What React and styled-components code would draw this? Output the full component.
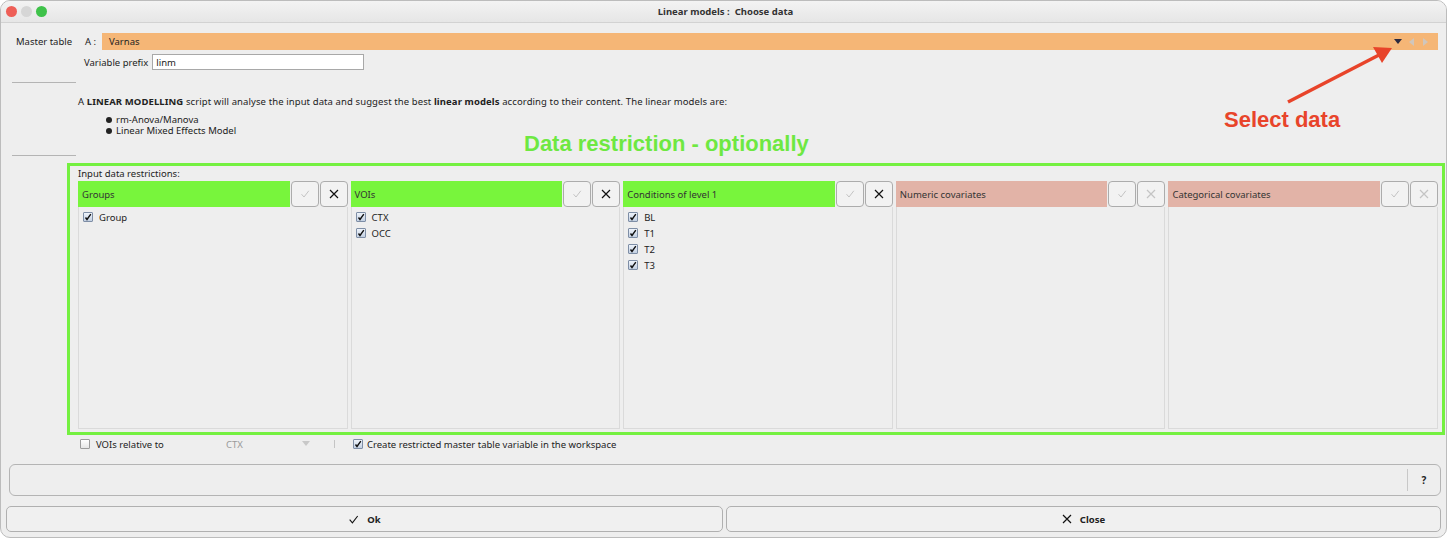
import React from "react";
import styled, { createGlobalStyle } from "styled-components";

const GlobalStyle = createGlobalStyle`
  html, body { margin: 0; padding: 0; background: #ffffff; }
  body { font-family: "Noto Sans", "DejaVu Sans", sans-serif; font-size: 9.5px; color: #222; }
`;

const columns = [
  { title: "Groups", active: true, items: ["Group"] },
  { title: "VOIs", active: true, items: ["CTX", "OCC"] },
  { title: "Conditions of level 1", active: true, items: ["BL", "T1", "T2", "T3"] },
  { title: "Numeric covariates", active: false, items: [] },
  { title: "Categorical covariates", active: false, items: [] },
];

function CheckMark({ color = "#222", size = 10 }) {
  return (
    <svg width={size} height={size} viewBox="0 0 10 10">
      <path d="M1.5 5.2 L4 8 L8.8 1.8" fill="none" stroke={color} strokeWidth="1" />
    </svg>
  );
}

function Cross({ color = "#111", size = 10 }) {
  return (
    <svg width={size} height={size} viewBox="0 0 10 10">
      <path d="M1 1 L9 9 M9 1 L1 9" fill="none" stroke={color} strokeWidth="1.2" />
    </svg>
  );
}

function Check({ checked }) {
  return (
    <Box checked={checked}>
      {checked ? (
        <svg width="8" height="8" viewBox="0 0 8 8">
          <path d="M1.5 4.5 L3 6.5 L6.8 1.2" fill="none" stroke="#111" strokeWidth="1.4" />
        </svg>
      ) : null}
    </Box>
  );
}

function App() {
  return (
    <>
      <GlobalStyle />
      <Window>
        <TitleBar>
          <Lights>
            <Light color="#ee5f57" />
            <Light color="#d6d6d6" />
            <Light color="#3fc24a" />
          </Lights>
          <Title>Linear models :&nbsp; Choose data</Title>
        </TitleBar>
        <Body>
          <TopRow>
            <Label>Master table</Label>
            <Prefix>A :</Prefix>
            <Selector>
              <span>Varnas</span>
              <SelectorTools>
                <svg width="8" height="6" viewBox="0 0 8 6">
                  <path d="M0 0 H8 L4 5 Z" fill="#2a2a40" />
                </svg>
                <svg width="6" height="8" viewBox="0 0 6 8">
                  <path d="M5 0 V8 L0 4 Z" fill="#d0c6bc" />
                </svg>
                <svg width="6" height="8" viewBox="0 0 6 8">
                  <path d="M1 0 V8 L6 4 Z" fill="#d0c6bc" />
                </svg>
              </SelectorTools>
            </Selector>
          </TopRow>
          <PrefixRow>
            <span>Variable prefix</span>
            <TextInput>linm</TextInput>
          </PrefixRow>
          <Separator gap={12} />
          <Description>
            A <b>LINEAR MODELLING</b> script will analyse the input data and suggest the best{" "}
            <b>linear models</b> according to their content. The linear models are:
          </Description>
          <Bullets>
            <li>rm-Anova/Manova</li>
            <li>Linear Mixed Effects Model</li>
          </Bullets>
          <Separator gap={0} />
          <Frame>
            <FrameLabel>Input data restrictions:</FrameLabel>
            <Columns>
              {columns.map((col) => (
                <Column key={col.title}>
                  <Header>
                    <HeaderTitle active={col.active}>{col.title}</HeaderTitle>
                    <SquareButton>
                      <CheckMark color="#c4c4c4" />
                    </SquareButton>
                    <SquareButton>
                      <Cross color={col.active ? "#111" : "#c4c4c4"} />
                    </SquareButton>
                  </Header>
                  <List>
                    {col.items.map((item) => (
                      <Item key={item}>
                        <Check checked />
                        <span>{item}</span>
                      </Item>
                    ))}
                  </List>
                </Column>
              ))}
            </Columns>
          </Frame>
          <OptionsRow>
            <Check checked={false} />
            <OptionText>VOIs relative to</OptionText>
            <Muted>CTX</Muted>
            <svg width="8" height="6" viewBox="0 0 8 6">
              <path d="M0 0 H8 L4 5 Z" fill="#c8c8c8" />
            </svg>
            <VBar />
            <Check checked />
            <span>Create restricted master table variable in the workspace</span>
          </OptionsRow>
          <StatusBar>
            <StatusText />
            <HelpCell>?</HelpCell>
          </StatusBar>
          <ButtonRow>
            <ActionButton>
              <CheckMark color="#111" size={11} />
              <span>Ok</span>
            </ActionButton>
            <ActionButton>
              <Cross color="#111" size={10} />
              <span>Close</span>
            </ActionButton>
          </ButtonRow>
        </Body>

        <Annotation color="#6ee842" top={131} left={523}>
          Data restriction - optionally
        </Annotation>
        <Annotation color="#e8442a" top={107} left={1223}>
          Select data
        </Annotation>
        <Arrow width="120" height="70" viewBox="0 0 120 70">
          <line x1="7" y1="61" x2="98" y2="14" stroke="#e8442a" strokeWidth="3.5" />
          <path d="M111 7 L92 6 L101 22 Z" fill="#e8442a" />
        </Arrow>
      </Window>
    </>
  );
}

const Window = styled.div`
  position: relative;
  box-sizing: border-box;
  width: 1447px;
  height: 538px;
  border: 1px solid #bcbcbc;
  border-radius: 10px;
  overflow: hidden;
  background: #eeeeee;
`;

const TitleBar = styled.div`
  position: relative;
  height: 21px;
  display: flex;
  align-items: center;
  justify-content: center;
  background: linear-gradient(#f3f3f3, #e6e6e6);
  border-bottom: 1px solid #d2d2d2;
`;

const Lights = styled.div`
  position: absolute;
  left: 5px;
  top: 5px;
  display: flex;
  gap: 4px;
`;

const Light = styled.span`
  width: 11px;
  height: 11px;
  border-radius: 50%;
  background: ${({ color }) => color};
`;

const Title = styled.div`
  font-weight: 700;
  font-size: 9.5px;
  color: #333;
  margin-left: 4px;
`;

const Body = styled.div`
  display: flex;
  flex-direction: column;
`;

const TopRow = styled.div`
  margin-top: 10px;
  height: 17px;
  display: flex;
  align-items: center;
  padding-left: 15px;
  padding-right: 8px;
`;

const Label = styled.span`
  width: 69px;
`;

const Prefix = styled.span`
  width: 17px;
`;

const Selector = styled.div`
  flex: 1;
  height: 17px;
  background: #f5b676;
  display: flex;
  align-items: center;
  justify-content: space-between;
  padding: 0 10px 0 7px;
`;

const SelectorTools = styled.div`
  display: flex;
  align-items: center;
  gap: 7px;
`;

const PrefixRow = styled.div`
  margin-top: 4px;
  height: 16px;
  display: flex;
  align-items: center;
  gap: 4px;
  padding-left: 83px;
`;

const TextInput = styled.div`
  box-sizing: border-box;
  width: 212px;
  height: 16px;
  background: #ffffff;
  border: 1px solid #a8a8a8;
  padding: 0 3px;
  display: flex;
  align-items: center;
`;

const Separator = styled.div`
  margin-top: ${({ gap }) => gap}px;
  margin-left: 11px;
  width: 64px;
  height: 1px;
  background: #b4b4b4;
`;

const Description = styled.div`
  margin-top: 12px;
  padding-left: 77px;
  line-height: 13px;
  letter-spacing: 0.1px;
  b {
    font-weight: 700;
  }
`;

const Bullets = styled.ul`
  margin: 6px 0 19px;
  padding-left: 115px;
  line-height: 11px;
  list-style: none;
  li {
    position: relative;
  }
  li::before {
    content: "";
    position: absolute;
    left: -10px;
    top: 3px;
    width: 6px;
    height: 6px;
    border-radius: 50%;
    background: #222;
  }
`;

const Frame = styled.div`
  box-sizing: border-box;
  margin: 7px 0 0 66px;
  width: 1378px;
  height: 272px;
  border: 3px solid #74f040;
  padding: 2px 4px 3px 8px;
  display: flex;
  flex-direction: column;
`;

const FrameLabel = styled.div`
  height: 12px;
  line-height: 12px;
`;

const Columns = styled.div`
  margin-top: 1px;
  flex: 1;
  display: grid;
  grid-template-columns: repeat(5, 1fr);
  gap: 3px;
`;

const Column = styled.div`
  display: flex;
  flex-direction: column;
  min-width: 0;
`;

const Header = styled.div`
  height: 26px;
  display: flex;
  gap: 1px;
`;

const HeaderTitle = styled.div`
  flex: 1;
  background: ${({ active }) => (active ? "#78f53c" : "#e2b3a7")};
  display: flex;
  align-items: center;
  padding-left: 4px;
  color: #333;
`;

const SquareButton = styled.div`
  box-sizing: border-box;
  width: 28px;
  height: 26px;
  border: 1px solid #acacac;
  border-radius: 4px;
  background: #f2f2f2;
  display: flex;
  align-items: center;
  justify-content: center;
`;

const List = styled.div`
  flex: 1;
  box-sizing: border-box;
  border: 1px solid #dadada;
  border-top: none;
  padding: 4px 4px;
  display: flex;
  flex-direction: column;
  gap: 4px;
`;

const Item = styled.div`
  height: 12px;
  display: flex;
  align-items: center;
  gap: 6px;
`;

const Box = styled.span`
  box-sizing: border-box;
  width: 10px;
  height: 10px;
  border: 1px solid ${({ checked }) => (checked ? "#7e8ea6" : "#9c9c9c")};
  border-radius: 1px;
  background: ${({ checked }) =>
    checked ? "linear-gradient(#eef3fa, #c3d0e2)" : "linear-gradient(#ffffff, #e6e6e6)"};
  display: inline-flex;
  align-items: center;
  justify-content: center;
  flex-shrink: 0;
`;

const OptionsRow = styled.div`
  margin-top: 3px;
  height: 12px;
  display: flex;
  align-items: center;
  padding-left: 79px;
  gap: 4px;
`;

const OptionText = styled.span`
  margin-left: 2px;
  width: 126px;
`;

const Muted = styled.span`
  color: #9a9a9a;
  width: 72px;
`;

const VBar = styled.span`
  width: 1px;
  height: 8px;
  background: #c4c4c4;
  margin: 0 14px 0 20px;
`;

const StatusBar = styled.div`
  box-sizing: border-box;
  margin: 14px 0 0 8px;
  width: 1432px;
  height: 32px;
  border: 1px solid #b4b4b4;
  border-radius: 6px;
  display: flex;
`;

const StatusText = styled.div`
  flex: 1;
`;

const HelpCell = styled.div`
  width: 32px;
  margin: 4px 0;
  border-left: 1px solid #c8c8c8;
  display: flex;
  align-items: center;
  justify-content: center;
  font-weight: 700;
  font-size: 10px;
`;

const ButtonRow = styled.div`
  margin: 10px 0 0 5px;
  width: 1435px;
  display: grid;
  grid-template-columns: 717px 1fr;
  gap: 3px;
`;

const ActionButton = styled.div`
  box-sizing: border-box;
  height: 26px;
  border: 1px solid #b0b0b0;
  border-radius: 5px;
  background: #f0f0f0;
  display: flex;
  align-items: center;
  justify-content: center;
  gap: 8px;
  font-weight: 700;
  font-size: 9.5px;
`;

const Annotation = styled.div`
  position: absolute;
  top: ${({ top }) => top}px;
  left: ${({ left }) => left}px;
  font-family: "Liberation Sans", Arial, sans-serif;
  font-weight: 700;
  font-size: 22px;
  line-height: 24px;
  color: ${({ color }) => color};
  white-space: nowrap;
`;

const Arrow = styled.svg`
  position: absolute;
  left: 1280px;
  top: 40px;
`;

export default App;
